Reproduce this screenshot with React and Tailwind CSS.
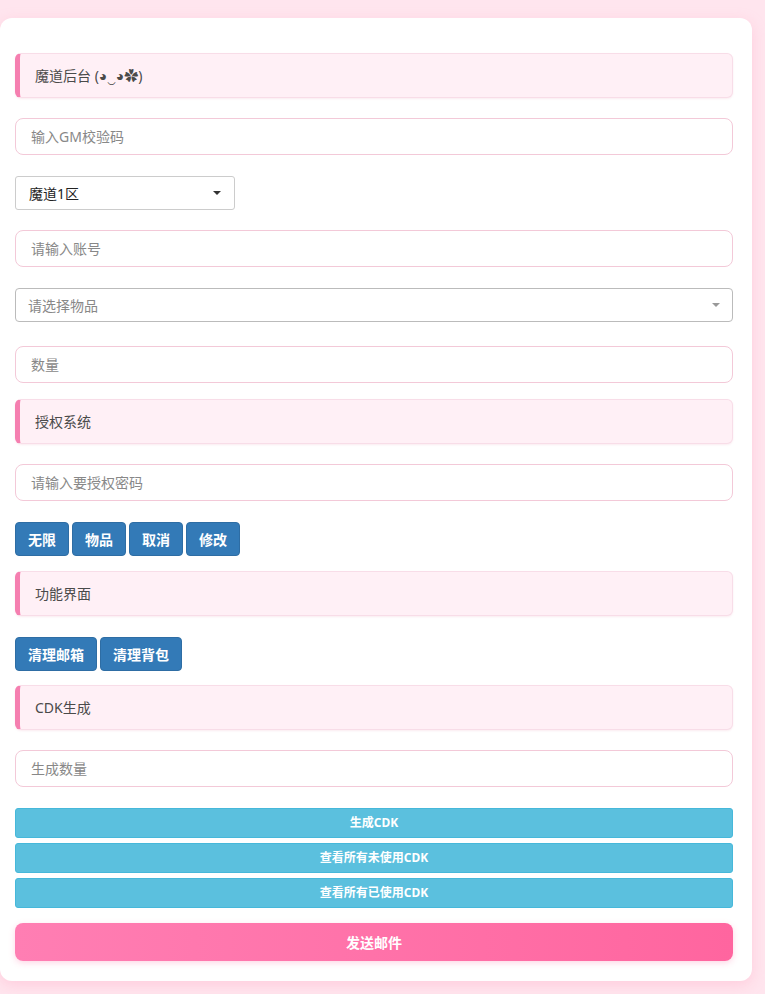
import React from 'react'

const font = { fontFamily: '"Noto Sans", "Noto Sans CJK SC", sans-serif' }

const Header = ({ children }) => (
  <div className="h-[45px] flex items-center pl-[15px] bg-[#fff0f6] border border-[#f8dde8] border-l-[5px] border-l-[#f57fb0] rounded-md text-[14px] text-[#4a4a4a] shadow-[0_1px_2px_rgba(240,180,200,0.25)]">
    {children}
  </div>
)

const Input = ({ placeholder }) => (
  <input
    placeholder={placeholder}
    className="h-[37px] w-full px-[15px] rounded-lg border border-[#f3c9d8] bg-white text-[14px] text-[#555] placeholder:text-[#888] outline-none"
    style={font}
  />
)

const BlueBtn = ({ children, wide }) => (
  <button className={`${wide ? 'w-[82px]' : 'w-[54px]'} h-[34px] rounded-[4px] bg-[#337ab7] border border-[#2e6da4] text-white text-[14px] font-bold`}>
    {children}
  </button>
)

const InfoBtn = ({ children }) => (
  <button className="h-[30px] w-full rounded-[3px] bg-[#5bc0de] border border-[#46b8da] text-white text-[12px] font-bold">
    {children}
  </button>
)

export default function App() {
  return (
    <div className="min-h-screen bg-[#ffe5ee] pt-[18px] pb-[14px]" style={font}>
      <div className="w-[752px] bg-white rounded-xl shadow-[0_4px_14px_rgba(255,160,190,0.35)] pl-[15px] pr-[19px] pt-[35px] pb-[20px]">
        <Header>魔道后台 (◕‿◕✿)</Header>
        <div className="mt-[20px]"><Input placeholder="输入GM校验码" /></div>
        <div className="mt-[21px] w-[220px] h-[34px] border border-[#ccc] rounded-[3px] flex items-center justify-between pl-[13px] pr-[13px] text-[14px] text-[#222]">
          <span>魔道1区</span>
          <svg width="8" height="4" viewBox="0 0 8 4"><path d="M0 0h8L4 4z" fill="#333" /></svg>
        </div>
        <div className="mt-[20px]"><Input placeholder="请输入账号" /></div>
        <div className="mt-[21px] h-[34px] border border-[#bbb] rounded-[4px] flex items-center justify-between pl-[12px] pr-[12px] text-[14px] text-[#888]">
          <span>请选择物品</span>
          <svg width="8" height="4" viewBox="0 0 8 4"><path d="M0 0h8L4 4z" fill="#999" /></svg>
        </div>
        <div className="mt-[24px]"><Input placeholder="数量" /></div>
        <div className="mt-[16px]"><Header>授权系统</Header></div>
        <div className="mt-[20px]"><Input placeholder="请输入要授权密码" /></div>
        <div className="mt-[21px] flex gap-[3px]">
          <BlueBtn>无限</BlueBtn>
          <BlueBtn>物品</BlueBtn>
          <BlueBtn>取消</BlueBtn>
          <BlueBtn>修改</BlueBtn>
        </div>
        <div className="mt-[15px]"><Header>功能界面</Header></div>
        <div className="mt-[21px] flex gap-[3px]">
          <BlueBtn wide>清理邮箱</BlueBtn>
          <BlueBtn wide>清理背包</BlueBtn>
        </div>
        <div className="mt-[14px]"><Header>CDK生成</Header></div>
        <div className="mt-[20px]"><Input placeholder="生成数量" /></div>
        <div className="mt-[21px] flex flex-col gap-[5px]">
          <InfoBtn>生成CDK</InfoBtn>
          <InfoBtn>查看所有未使用CDK</InfoBtn>
          <InfoBtn>查看所有已使用CDK</InfoBtn>
        </div>
        <button className="mt-[15px] h-[38px] w-full rounded-lg bg-gradient-to-r from-[#ff7eb3] to-[#ff659f] text-white text-[14px] font-bold shadow-[0_2px_6px_rgba(255,120,170,0.3)]">
          发送邮件
        </button>
      </div>
    </div>
  )
}
